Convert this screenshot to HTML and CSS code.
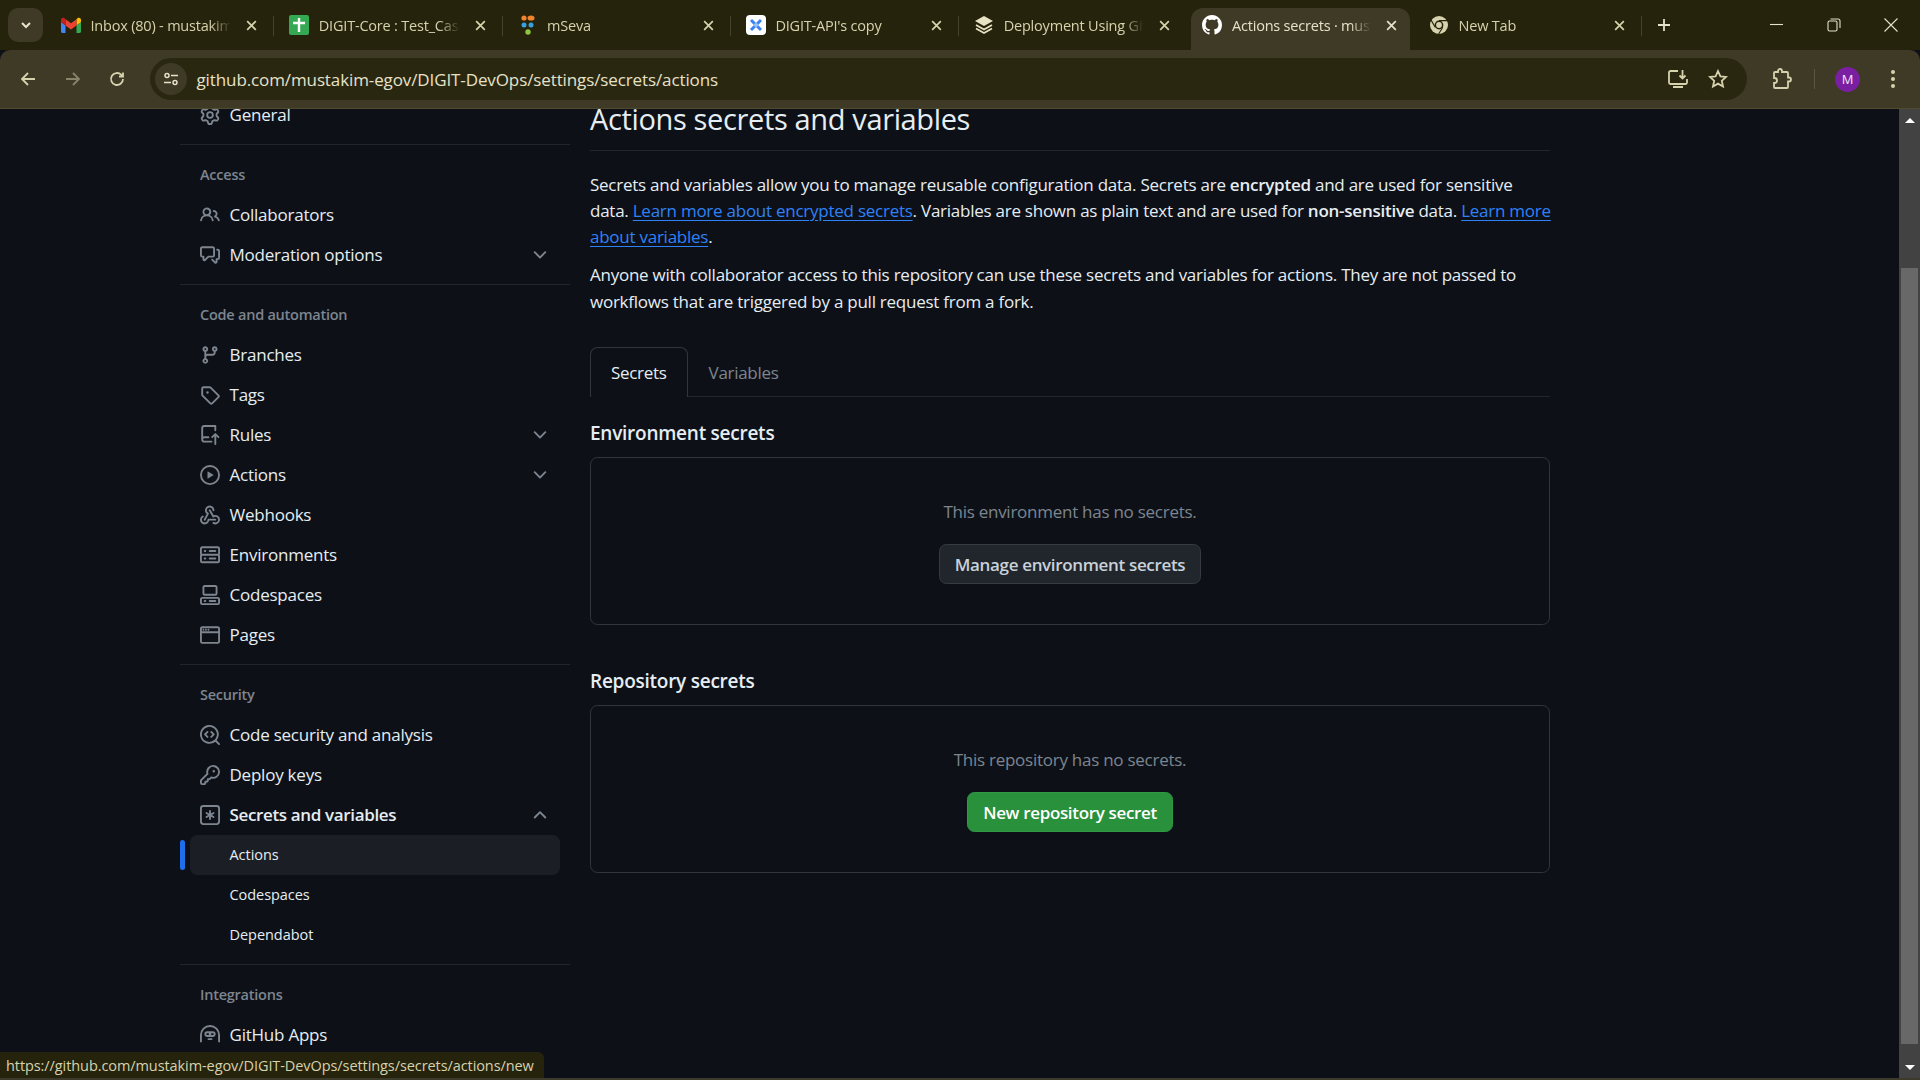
FILE: index.html
```html
<!DOCTYPE html>
<html lang="en">
<head>
    <meta charset="UTF-8">
    <title>Actions secrets</title>
    <link rel="stylesheet" href="styles.css">
</head>
<body>

<div class="tabstrip">
    <div class="tab-search"><svg viewBox="0 0 16 16" width="16" height="16"><path d="M4 6l4 4 4-4" fill="none" stroke="currentColor" stroke-width="2"/></svg></div>
    <div class="tabs">
        <div class="tab sep">
            <svg class="favicon" viewBox="0 0 20 16"><path d="M1.4 16H4.5V8.4L0 5v9.6C0 15.4.6 16 1.4 16Z" fill="#4285f4"/><path d="M15.5 16h3.1c.8 0 1.4-.6 1.4-1.4V5l-4.5 3.4Z" fill="#34a853"/><path d="M15.5 2.2v6.2L20 5V3c0-1.900-2.100-2.900-3.500-1.800Z" fill="#fbbc04"/><path d="M4.500 8.400V2.200L10 6.300l5.500-4.100v6.200L10 12.500Z" fill="#ea4335"/><path d="M0 3v2l4.500 3.400V2.200L3.500 1.200C2.100.1 0 1.100 0 3Z" fill="#c5221f"/></svg>
            <span class="tab-title">Inbox (80) - mustakim.egov</span>
            <svg class="tab-close" viewBox="0 0 12 12"><path d="M2 2l8 8M10 2l-8 8"/></svg>
        </div>
        <div class="tab sep">
            <svg class="favicon" viewBox="0 0 20 20"><rect width="20" height="20" rx="2" fill="#34a853"/><path d="M10 3v14M4 8h12" stroke="#fff" stroke-width="2.400"/></svg>
            <span class="tab-title">DIGIT-Core : Test_Cases</span>
            <svg class="tab-close" viewBox="0 0 12 12"><path d="M2 2l8 8M10 2l-8 8"/></svg>
        </div>
        <div class="tab sep">
            <svg class="favicon" viewBox="0 0 20 20"><circle cx="6" cy="3" r="2.600" fill="#f2842c"/><ellipse cx="13" cy="3" rx="3.500" ry="2.600" fill="#f2842c"/><circle cx="6" cy="10" r="2.500" fill="#3aa0dc"/><circle cx="13" cy="10" r="2.500" fill="#3aa0dc"/><circle cx="10" cy="17" r="2.700" fill="#8dc63f"/></svg>
            <span class="tab-title">mSeva</span>
            <svg class="tab-close" viewBox="0 0 12 12"><path d="M2 2l8 8M10 2l-8 8"/></svg>
        </div>
        <div class="tab sep">
            <svg class="favicon" viewBox="0 0 20 20"><rect width="20" height="20" rx="4" fill="#fff"/><path d="M5 5l10 10M15 5L5 15" stroke="#3b82f6" stroke-width="3"/><circle cx="10" cy="10" r="2" fill="#9cc3f7"/></svg>
            <span class="tab-title">DIGIT-API's copy</span>
            <svg class="tab-close" viewBox="0 0 12 12"><path d="M2 2l8 8M10 2l-8 8"/></svg>
        </div>
        <div class="tab">
            <svg class="favicon" viewBox="0 0 20 20"><path d="M10 1l9 5-9 5-9-5Z" fill="#e6e2c4"/><path d="M2 10l8 4.500 8-4.500M2 13.500l8 4.500 8-4.500" fill="none" stroke="#e6e2c4" stroke-width="1.800"/></svg>
            <span class="tab-title">Deployment Using GitHub</span>
            <svg class="tab-close" viewBox="0 0 12 12"><path d="M2 2l8 8M10 2l-8 8"/></svg>
        </div>
        <div class="tab active">
            <svg class="favicon" viewBox="0 0 16 16"><path fill="#fff" d="M8 0c4.420 0 8 3.580 8 8a8.013 8.013 0 0 1-5.450 7.590c-.4.080-.55-.17-.55-.38 0-.27.010-1.130.010-2.200 0-.75-.25-1.230-.54-1.480 1.780-.2 3.650-.88 3.650-3.950 0-.88-.31-1.590-.82-2.150.080-.2.360-1.020-.08-2.120 0 0-.67-.22-2.200.82-.64-.18-1.320-.27-2-.27-.68 0-1.360.090-2 .27-1.530-1.030-2.200-.82-2.200-.82-.44 1.100-.16 1.920-.08 2.120-.51.560-.82 1.280-.82 2.150 0 3.060 1.860 3.750 3.640 3.950-.23.2-.44.550-.51 1.070-.46.210-1.610.550-2.330-.66-.15-.24-.6-.83-1.230-.82-.67.010-.27.380.010.530.340.190.730.9.820 1.130.160.450.680 1.310 2.690.940 0 .670.010 1.300.010 1.490 0 .210-.15.450-.55.380A7.995 7.995 0 0 1 0 8c0-4.420 3.580-8 8-8Z"/></svg>
            <span class="tab-title">Actions secrets · mustakim</span>
            <svg class="tab-close" viewBox="0 0 12 12"><path d="M2 2l8 8M10 2l-8 8"/></svg>
        </div>
        <div class="tab sep">
            <svg class="favicon" viewBox="0 0 20 20"><circle cx="10" cy="10" r="9" fill="#d6d2ae"/><circle cx="10" cy="10" r="4.400" fill="#25230b"/><circle cx="10" cy="10" r="2.900" fill="#d6d2ae"/><path d="M10 5.600h8.300M6.200 12.200L2.100 5.100M13.800 12.200L9.600 19" stroke="#25230b" stroke-width="1.100"/></svg>
            <span class="tab-title">New Tab</span>
            <svg class="tab-close" viewBox="0 0 12 12"><path d="M2 2l8 8M10 2l-8 8"/></svg>
        </div>
        <div class="new-tab"><svg viewBox="0 0 14 14" width="14" height="14"><path d="M7 1v12M1 7h12" fill="none" stroke="currentColor" stroke-width="1.800"/></svg></div>
    </div>
    <div class="window-controls">
        <div class="win-btn"><svg viewBox="0 0 14 14" width="14" height="14"><path d="M0 6.500h13"/></svg></div>
        <div class="win-btn"><svg viewBox="0 0 14 14" width="14" height="14"><rect x="1" y="3" width="9" height="10" rx="1.500"/><path d="M3.500 1h7.500a2 2 0 0 1 2 2v7"/></svg></div>
        <div class="win-btn"><svg viewBox="0 0 14 14" width="14" height="14"><path d="M.5.500l13 13M13.500.500l-13 13"/></svg></div>
    </div>
</div>

<div class="toolbar">
    <div class="tool-btn"><svg viewBox="0 0 18 18" width="18" height="18"><path d="M16 9H3M9 3L3 9l6 6"/></svg></div>
    <div class="tool-btn dim"><svg viewBox="0 0 18 18" width="18" height="18"><path d="M2 9h13M9 3l6 6-6 6"/></svg></div>
    <div class="tool-btn"><svg viewBox="0 0 18 18" width="18" height="18"><path d="M15 9a6 6 0 1 1-1.800-4.300L15 6.500M15 2.500v4h-4"/></svg></div>
    <div class="omnibox">
        <div class="site-info"><svg viewBox="0 0 16 16" width="16" height="16"><circle cx="4" cy="4.500" r="2"/><path d="M8 4.500h7M1 11.500h7"/><circle cx="12" cy="11.500" r="2"/></svg></div>
        <span class="url">github.com/mustakim-egov/DIGIT-DevOps/settings/secrets/actions</span>
        <div class="omni-icon"><svg viewBox="0 0 22 22" width="22" height="22"><path d="M11 3H3.500A1.500 1.500 0 0 0 2 4.500v10A1.500 1.500 0 0 0 3.500 16h15a1.500 1.500 0 0 0 1.500-1.500V11M6 19h10M15.500 2v8M12.500 7.500l3 3 3-3"/></svg></div>
        <div class="omni-icon"><svg viewBox="0 0 20 20" width="20" height="20"><path d="M10 2l2.400 5.300 5.600.6-4.200 3.900 1.200 5.700-5-2.900-5 2.900 1.200-5.700L2 7.900l5.600-.6Z"/></svg></div>
    </div>
    <div class="tool-btn puzzle"><svg viewBox="0 0 22 22" width="22" height="22"><path d="M8 4V3a2 2 0 0 1 4 0v1h5a1 1 0 0 1 1 1v4.500h1a2 2 0 0 1 0 4h-1V19a1 1 0 0 1-1 1H5a1 1 0 0 1-1-1v-4h.5a2.500 2.500 0 0 0 0-5H4V5a1 1 0 0 1 1-1Z"/></svg></div>
    <div class="tool-sep"></div>
    <div class="avatar">M</div>
    <div class="kebab"><i></i><i></i><i></i></div>
</div>

<div class="page">
    <div class="viewport">
        <div class="layout">
            <nav class="side-nav">
                <a class="nav-row"><svg class="octicon" viewBox="0 0 16 16"><path d="M8 0a8.200 8.200 0 0 1 .701.031C9.444.095 9.990.645 10.160 1.290l.288 1.107c.018.066.079.158.212.224.231.114.454.243.668.386.123.082.233.090.299.071l1.103-.303c.644-.176 1.392.021 1.820.630.270.385.506.792.704 1.218.315.675.111 1.422-.364 1.891l-.814.806c-.049.048-.098.147-.088.294.016.257.016.515 0 .772-.010.147.038.246.088.294l.814.806c.475.469.679 1.216.364 1.891a7.977 7.977 0 0 1-.704 1.217c-.428.610-1.176.807-1.820.630l-1.102-.302c-.067-.019-.177-.011-.3.071a5.909 5.909 0 0 1-.668.386c-.133.066-.194.158-.211.224l-.29 1.106c-.168.646-.715 1.196-1.458 1.260a8.006 8.006 0 0 1-1.402 0c-.743-.064-1.289-.614-1.458-1.260l-.289-1.106c-.018-.066-.079-.158-.212-.224a5.738 5.738 0 0 1-.668-.386c-.123-.082-.233-.090-.299-.071l-1.103.303c-.644.176-1.392-.021-1.820-.630a8.120 8.120 0 0 1-.704-1.218c-.315-.675-.111-1.422.363-1.891l.815-.806c.050-.048.098-.147.088-.294a6.214 6.214 0 0 1 0-.772c.010-.147-.038-.246-.088-.294l-.815-.806C.635 6.045.431 5.298.746 4.623a7.920 7.920 0 0 1 .704-1.217c.428-.610 1.176-.807 1.820-.630l1.102.302c.067.019.177.011.3-.071.214-.143.437-.272.668-.386.133-.066.194-.158.211-.224l.29-1.106C6.009.645 6.556.095 7.299.030 7.530.010 7.764 0 8 0Zm-.571 1.525c-.036.003-.108.036-.137.146l-.289 1.105c-.147.561-.549.967-.998 1.189-.173.086-.34.183-.5.29-.417.278-.97.423-1.529.27l-1.103-.303c-.109-.03-.175.016-.195.045-.22.312-.412.644-.573.99-.014.031-.021.11.059.19l.815.806c.411.406.562.957.53 1.456a4.709 4.709 0 0 0 0 .582c.032.499-.119 1.050-.53 1.456l-.815.806c-.081.08-.073.159-.059.19.162.346.353.677.573.989.02.03.085.076.195.046l1.102-.303c.56-.153 1.113-.008 1.530.27.161.107.328.204.501.29.447.222.85.629.997 1.189l.289 1.105c.029.109.101.143.137.146a6.600 6.600 0 0 0 1.142 0c.036-.003.108-.036.137-.146l.289-1.105c.147-.561.549-.967.998-1.189.173-.086.34-.183.5-.29.417-.278.97-.423 1.529-.27l1.103.303c.109.029.175-.016.195-.045.22-.313.411-.644.573-.99.014-.031.021-.11-.059-.19l-.815-.806c-.411-.406-.562-.957-.53-1.456a4.709 4.709 0 0 0 0-.582c-.032-.499.119-1.050.53-1.456l.815-.806c.081-.08.073-.159.059-.19a6.464 6.464 0 0 0-.573-.989c-.02-.03-.085-.076-.195-.046l-1.102.303c-.56.153-1.113.008-1.530-.27a4.440 4.440 0 0 0-.501-.29c-.447-.222-.85-.629-.997-1.189l-.289-1.105c-.029-.11-.101-.143-.137-.146a6.600 6.600 0 0 0-1.142 0ZM11 8a3 3 0 1 1-6 0 3 3 0 0 1 6 0ZM9.500 8a1.500 1.500 0 1 0-3.001.001A1.500 1.500 0 0 0 9.500 8Z"/></svg>General</a>

                <div class="nav-group">
                    <h3 class="nav-heading">Access</h3>
                    <a class="nav-row"><svg class="octicon" viewBox="0 0 16 16"><path d="M2 5.500a3.500 3.500 0 1 1 5.898 2.549 5.508 5.508 0 0 1 3.034 4.084.75.75 0 1 1-1.482.235 4 4 0 0 0-7.9 0 .75.75 0 0 1-1.482-.236A5.507 5.507 0 0 1 3.102 8.050 3.490 3.490 0 0 1 2 5.500ZM11 4a3.001 3.001 0 0 1 2.220 5.018 5.010 5.010 0 0 1 2.560 3.012.749.749 0 0 1-.885.954.752.752 0 0 1-.549-.514 3.507 3.507 0 0 0-2.522-2.372.75.75 0 0 1-.574-.73v-.352a.75.75 0 0 1 .416-.672A1.500 1.500 0 0 0 11 5.500.75.75 0 0 1 11 4Zm-5.500-.5a2 2 0 1 0-.001 3.999A2 2 0 0 0 5.500 3.500Z"/></svg>Collaborators</a>
                    <a class="nav-row"><svg class="octicon" viewBox="0 0 16 16"><path d="M1.750 1h8.500c.966 0 1.750.784 1.750 1.750v5.500A1.750 1.750 0 0 1 10.250 10H7.061l-2.574 2.573A1.458 1.458 0 0 1 2 11.543V10h-.25A1.750 1.750 0 0 1 0 8.250v-5.500C0 1.784.784 1 1.750 1ZM1.500 2.750v5.500c0 .138.112.25.25.25h1a.75.75 0 0 1 .75.75v2.190l2.720-2.720a.749.749 0 0 1 .53-.22h3.500a.25.25 0 0 0 .25-.25v-5.500a.25.25 0 0 0-.25-.25h-8.500a.25.25 0 0 0-.25.25Zm13 2a.25.25 0 0 0-.25-.25h-.5a.75.75 0 0 1 0-1.500h.5c.966 0 1.750.784 1.750 1.750v5.500A1.750 1.750 0 0 1 14.250 12H14v1.543a1.458 1.458 0 0 1-2.487 1.030L9.220 12.280a.749.749 0 0 1 .326-1.275.749.749 0 0 1 .734.215l2.220 2.220v-2.190a.75.75 0 0 1 .75-.75h1a.25.25 0 0 0 .25-.25Z"/></svg>Moderation options<svg class="chevron" viewBox="0 0 16 16"><path d="M12.780 5.220a.749.749 0 0 1 0 1.060l-4.250 4.250a.749.749 0 0 1-1.060 0L3.220 6.280a.749.749 0 1 1 1.060-1.060L8 8.939l3.720-3.719a.749.749 0 0 1 1.060 0Z"/></svg></a>
                </div>

                <div class="nav-group">
                    <h3 class="nav-heading">Code and automation</h3>
                    <a class="nav-row"><svg class="octicon" viewBox="0 0 16 16"><path d="M9.500 3.250a2.250 2.250 0 1 1 3 2.122V6A2.500 2.500 0 0 1 10 8.500H6a1 1 0 0 0-1 1v1.128a2.251 2.251 0 1 1-1.500 0V5.372a2.250 2.250 0 1 1 1.500 0v1.836A2.493 2.493 0 0 1 6 7h4a1 1 0 0 0 1-1v-.628A2.250 2.250 0 0 1 9.500 3.250Zm-6 0a.75.75 0 1 0 1.500 0 .75.75 0 0 0-1.500 0Zm8.250-.75a.75.75 0 1 0 0 1.500.75.75 0 0 0 0-1.500ZM4.250 12a.75.75 0 1 0 0 1.500.75.75 0 0 0 0-1.500Z"/></svg>Branches</a>
                    <a class="nav-row"><svg class="octicon" viewBox="0 0 16 16"><path d="M1 7.775V2.750C1 1.784 1.784 1 2.750 1h5.025c.464 0 .91.184 1.238.513l6.250 6.250a1.750 1.750 0 0 1 0 2.474l-5.026 5.026a1.750 1.750 0 0 1-2.474 0l-6.250-6.250A1.752 1.752 0 0 1 1 7.775Zm1.500 0c0 .066.026.13.073.177l6.250 6.250a.25.25 0 0 0 .354 0l5.025-5.025a.25.25 0 0 0 0-.354l-6.250-6.250a.25.25 0 0 0-.177-.073H2.750a.25.25 0 0 0-.25.25ZM6 5a1 1 0 1 1 0 2 1 1 0 0 1 0-2Z"/></svg>Tags</a>
                    <a class="nav-row"><svg class="octicon" viewBox="0 0 16 16"><path d="M1 2.500A2.500 2.500 0 0 1 3.500 0h8.750a.75.75 0 0 1 .75.75v3.500a.75.75 0 0 1-1.500 0V1.500h-8a1 1 0 0 0-1 1v6.708A2.493 2.493 0 0 1 3.500 9h3.250a.75.75 0 0 1 0 1.500H3.500a1 1 0 0 0 0 2h5.750a.75.75 0 0 1 0 1.500H3.500A2.500 2.500 0 0 1 1 11.500Zm13.230 7.790h-.001l-1.224-1.224v6.184a.75.75 0 0 1-1.500 0V9.066L10.280 10.290a.75.75 0 0 1-1.060-1.061l2.505-2.504a.75.75 0 0 1 1.060 0L15.290 9.230a.751.751 0 0 1-.018 1.042.751.751 0 0 1-1.042.018Z"/></svg>Rules<svg class="chevron" viewBox="0 0 16 16"><path d="M12.780 5.220a.749.749 0 0 1 0 1.060l-4.250 4.250a.749.749 0 0 1-1.060 0L3.220 6.280a.749.749 0 1 1 1.060-1.060L8 8.939l3.720-3.719a.749.749 0 0 1 1.060 0Z"/></svg></a>
                    <a class="nav-row"><svg class="octicon" viewBox="0 0 16 16"><path d="M8 0a8 8 0 1 1 0 16A8 8 0 0 1 8 0ZM1.500 8a6.500 6.500 0 1 0 13 0 6.500 6.500 0 0 0-13 0Zm4.879-2.773 4.264 2.559a.25.25 0 0 1 0 .428l-4.264 2.559A.25.25 0 0 1 6 10.559V5.442a.25.25 0 0 1 .379-.215Z"/></svg>Actions<svg class="chevron" viewBox="0 0 16 16"><path d="M12.780 5.220a.749.749 0 0 1 0 1.060l-4.250 4.250a.749.749 0 0 1-1.060 0L3.220 6.280a.749.749 0 1 1 1.060-1.060L8 8.939l3.720-3.719a.749.749 0 0 1 1.060 0Z"/></svg></a>
                    <a class="nav-row"><svg class="octicon" viewBox="0 0 16 16"><path d="M5.500 4.250a2.250 2.250 0 0 1 4.500 0 .75.75 0 0 0 1.500 0 3.750 3.750 0 1 0-6.140 2.889l-2.272 4.258a.75.75 0 0 0 1.324.706L7 7.250a.75.75 0 0 0-.309-1.015A2.250 2.250 0 0 1 5.500 4.250Z"/><path d="M7.364 3.607a.75.75 0 0 1 1.030.257l2.608 4.349a3.750 3.750 0 1 1-.628 6.785.75.75 0 0 1 .752-1.299 2.250 2.250 0 1 0-.033-3.880.75.75 0 0 1-1.030-.256L7.107 4.636a.75.75 0 0 1 .257-1.030Z"/><path d="M2.900 8.776A.75.75 0 0 1 2.625 9.800 2.250 2.250 0 1 0 6 11.750a.75.75 0 0 1 .75-.751h5.500a.75.75 0 0 1 0 1.500H7.425a3.751 3.751 0 1 1-5.550-3.998.75.75 0 0 1 1.024.274Z"/></svg>Webhooks</a>
                    <a class="nav-row"><svg class="octicon" viewBox="0 0 16 16"><path d="M1.750 1h12.500c.966 0 1.750.784 1.750 1.750v4c0 .372-.116.717-.314 1 .198.283.314.628.314 1v4a1.750 1.750 0 0 1-1.750 1.750H1.750A1.750 1.750 0 0 1 0 12.750v-4c0-.372.116-.717.314-1a1.739 1.739 0 0 1-.314-1v-4C0 1.784.784 1 1.750 1ZM1.500 2.750v4c0 .138.112.25.25.25h12.500a.25.25 0 0 0 .25-.25v-4a.25.25 0 0 0-.25-.25H1.750a.25.25 0 0 0-.25.25Zm.25 5.750a.25.25 0 0 0-.25.25v4c0 .138.112.25.25.25h12.500a.25.25 0 0 0 .25-.25v-4a.25.25 0 0 0-.25-.25ZM7 4.750A.75.75 0 0 1 7.750 4h4.500a.75.75 0 0 1 0 1.500h-4.500A.75.75 0 0 1 7 4.750ZM7.750 10h4.500a.75.75 0 0 1 0 1.500h-4.500a.75.75 0 0 1 0-1.500ZM3 4.750A.75.75 0 0 1 3.750 4h.5a.75.75 0 0 1 0 1.500h-.5A.75.75 0 0 1 3 4.750ZM3.750 10h.5a.75.75 0 0 1 0 1.500h-.5a.75.75 0 0 1 0-1.500Z"/></svg>Environments</a>
                    <a class="nav-row"><svg class="octicon" viewBox="0 0 16 16"><path d="M0 11.250c0-.966.784-1.750 1.750-1.750h12.500c.966 0 1.750.784 1.750 1.750v3A1.750 1.750 0 0 1 14.250 16H1.750A1.750 1.750 0 0 1 0 14.250Zm2-9.500C2 .784 2.784 0 3.750 0h8.500C13.216 0 14 .784 14 1.750v5a1.750 1.750 0 0 1-1.750 1.750h-8.500A1.750 1.750 0 0 1 2 6.750Zm1.750-.25a.25.25 0 0 0-.25.25v5c0 .138.112.25.25.25h8.500a.25.25 0 0 0 .25-.25v-5a.25.25 0 0 0-.25-.25Zm-2 9.500a.25.25 0 0 0-.25.25v3c0 .138.112.25.25.25h12.500a.25.25 0 0 0 .25-.25v-3a.25.25 0 0 0-.25-.25Z"/><path d="M7 12.750a.75.75 0 0 1 .75-.75h4.500a.75.75 0 0 1 0 1.500h-4.500a.75.75 0 0 1-.75-.75Zm-4 0a.75.75 0 0 1 .75-.75h.5a.75.75 0 0 1 0 1.500h-.5a.75.75 0 0 1-.75-.75Z"/></svg>Codespaces</a>
                    <a class="nav-row"><svg class="octicon" viewBox="0 0 16 16"><path d="M0 2.750C0 1.784.784 1 1.750 1h12.500c.966 0 1.750.784 1.750 1.750v10.500A1.750 1.750 0 0 1 14.250 15H1.750A1.750 1.750 0 0 1 0 13.250ZM14.500 6.500h-13v6.750c0 .138.112.25.25.25h12.500a.25.25 0 0 0 .25-.25Zm-13-1.500h13V2.750a.25.25 0 0 0-.25-.25H1.750a.25.25 0 0 0-.25.25Zm2-1.250a.75.75 0 1 1-1.500 0 .75.75 0 0 1 1.500 0Zm2 0a.75.75 0 1 1-1.500 0 .75.75 0 0 1 1.500 0Zm2 0a.75.75 0 1 1-1.500 0 .75.75 0 0 1 1.500 0Z"/></svg>Pages</a>
                </div>

                <div class="nav-group">
                    <h3 class="nav-heading">Security</h3>
                    <a class="nav-row"><svg class="octicon" viewBox="0 0 16 16"><path d="M8.470 4.970a.75.75 0 0 0 0 1.060L9.940 7.500 8.470 8.970a.75.75 0 1 0 1.060 1.060l2-2a.75.75 0 0 0 0-1.060l-2-2a.75.75 0 0 0-1.060 0ZM6.530 6.030a.75.75 0 0 0-1.060-1.060l-2 2a.75.75 0 0 0 0 1.060l2 2a.75.75 0 1 0 1.060-1.060L5.060 7.500l1.470-1.470Z"/><path d="M12.246 13.307a7.501 7.501 0 1 1 1.060-1.060l2.474 2.473a.749.749 0 0 1-.326 1.275.749.749 0 0 1-.734-.215ZM1.500 7.500a6.002 6.002 0 0 0 3.608 5.504 6.002 6.002 0 0 0 6.486-1.117.748.748 0 0 1 .292-.293A6 6 0 1 0 1.500 7.500Z"/></svg>Code security and analysis</a>
                    <a class="nav-row"><svg class="octicon" viewBox="0 0 16 16"><path d="M10.500 0a5.499 5.499 0 1 1-1.288 10.848l-.932.932a.749.749 0 0 1-.53.22H7v.75a.749.749 0 0 1-.22.53l-.5.5a.749.749 0 0 1-.53.22H5v.75a.749.749 0 0 1-.22.53l-.5.5a.749.749 0 0 1-.53.22h-2A1.750 1.750 0 0 1 0 14.250v-2c0-.199.079-.389.22-.53l4.932-4.932A5.500 5.500 0 0 1 10.500 0Zm-4 5.500c-.001.431.069.86.205 1.269a.75.75 0 0 1-.181.768L1.500 12.560v1.690c0 .138.112.25.25.25h1.690l.06-.06v-1.190a.75.75 0 0 1 .75-.75h1.190l.06-.06v-1.190a.75.75 0 0 1 .75-.75h1.190l1.023-1.025a.75.75 0 0 1 .768-.18A4 4 0 1 0 6.500 5.500ZM11 6a1 1 0 1 1 0-2 1 1 0 0 1 0 2Z"/></svg>Deploy keys</a>
                    <a class="nav-row current"><svg class="octicon" viewBox="0 0 16 16"><path d="M0 2.750A2.750 2.750 0 0 1 2.750 0h10.500A2.750 2.750 0 0 1 16 2.750v10.500A2.750 2.750 0 0 1 13.250 16H2.750A2.750 2.750 0 0 1 0 13.250ZM2.750 1.500c-.69 0-1.250.56-1.250 1.250v10.500c0 .69.56 1.250 1.250 1.250h10.500c.69 0 1.250-.56 1.250-1.250V2.750c0-.69-.56-1.250-1.250-1.250Z"/><path d="M8 4a.75.75 0 0 1 .75.75V6.700l1.690-.975a.75.75 0 0 1 .75 1.300L9.500 8l1.690.976a.75.75 0 0 1-.75 1.298L8.750 9.300v1.951a.75.75 0 0 1-1.500 0V9.299l-1.690.976a.75.75 0 0 1-.75-1.300L6.500 8l-1.690-.975a.75.75 0 0 1 .75-1.300l1.690.976V4.750A.75.75 0 0 1 8 4Z"/></svg>Secrets and variables<svg class="chevron" viewBox="0 0 16 16"><path d="M3.220 10.530a.749.749 0 0 1 0-1.060l4.250-4.250a.749.749 0 0 1 1.060 0l4.250 4.250a.749.749 0 1 1-1.060 1.060L8 6.811 4.280 10.530a.749.749 0 0 1-1.060 0Z"/></svg></a>
                    <a class="nav-row sub selected">Actions</a>
                    <a class="nav-row sub">Codespaces</a>
                    <a class="nav-row sub">Dependabot</a>
                </div>

                <div class="nav-group">
                    <h3 class="nav-heading">Integrations</h3>
                    <a class="nav-row"><svg class="octicon" viewBox="0 0 16 16"><path d="M0 8a8 8 0 0 1 16 0v5.250a.75.75 0 0 1-1.500 0V8a6.500 6.500 0 1 0-13 0v5.250a.75.75 0 0 1-1.500 0Z"/><path d="M3.500 7.250A2.250 2.250 0 0 1 5.750 5h4.500a2.250 2.250 0 0 1 0 4.500h-4.500A2.250 2.250 0 0 1 3.500 7.250ZM5.750 6.500a.75.75 0 0 0 0 1.500h.75a.75.75 0 0 0 0-1.500Zm3.750 0a.75.75 0 0 0 0 1.500h.75a.75.75 0 0 0 0-1.500ZM6 11.250a.75.75 0 0 1 .75-.75h2.500a.75.75 0 0 1 0 1.500h-2.500a.75.75 0 0 1-.75-.75Z"/></svg>GitHub Apps</a>
                </div>
            </nav>

            <main class="content">
                <h2 class="page-title">Actions secrets and variables</h2>
                <p class="intro">Secrets and variables allow you to manage reusable configuration data. Secrets are <b>encrypted</b> and are used for sensitive<br>data. <a class="link">Learn more about encrypted secrets</a>. Variables are shown as plain text and are used for <b>non-sensitive</b> data. <a class="link">Learn more about variables</a>.</p>
                <p class="intro">Anyone with collaborator access to this repository can use these secrets and variables for actions. They are not passed to workflows that are triggered by a pull request from a fork.</p>

                <div class="tabnav">
                    <a class="tabnav-tab selected">Secrets</a>
                    <a class="tabnav-tab">Variables</a>
                </div>

                <h3 class="section-title">Environment secrets</h3>
                <div class="blank-box">
                    <p class="blank-text">This environment has no secrets.</p>
                    <a class="btn">Manage environment secrets</a>
                </div>

                <h3 class="section-title second">Repository secrets</h3>
                <div class="blank-box">
                    <p class="blank-text">This repository has no secrets.</p>
                    <a class="btn primary">New repository secret</a>
                </div>
            </main>
        </div>
        <div class="status-bubble">https://github.com/mustakim-egov/DIGIT-DevOps/settings/secrets/actions/new</div>
    </div>
    <div class="scrollbar">
        <div class="arrow up"></div>
        <div class="thumb"></div>
        <div class="arrow down"></div>
    </div>
</div>
<div class="window-edge"></div>

</body>
</html>
```
FILE: styles.css
```css
html, body {
    margin: 0;
    padding: 0;
    height: 100%;
    overflow: hidden;
    background-color: #0d1117;
    font-family: "Open Sans", "Liberation Sans", sans-serif;
}
body {
    display: flex;
    flex-direction: column;
}
a {
    color: inherit;
    text-decoration: none;
}

/* browser tabs */
.tabstrip {
    height: 50px;
    flex: none;
    display: flex;
    background-color: #25230b;
    color: #d6d2ae;
    font-size: 14.5px;
}
.tab-search {
    width: 35px;
    height: 34px;
    margin: 8px 3px 0 8px;
    border-radius: 10px;
    background-color: #3e3a26;
    display: flex;
    align-items: center;
    justify-content: center;
    color: #e8e4c8;
}
.tabs {
    flex: 1;
    display: flex;
    padding-top: 8px;
}
.tab {
    width: 228.3px;
    height: 42px;
    box-sizing: border-box;
    padding: 0 16px 8px 15px;
    display: flex;
    align-items: center;
    position: relative;
}
.tab.sep::after {
    content: "";
    position: absolute;
    right: 0;
    top: 8px;
    height: 20px;
    width: 1px;
    background-color: #45432c;
}
.tab.active {
    background-color: #3e3a26;
    color: #e6e2c8;
    border-radius: 12px 12px 0 0;
    margin: 0 4px;
    width: 218.5px;
    padding-left: 11px;
    padding-right: 12px;
}
.favicon {
    width: 20px;
    height: 20px;
    flex: none;
    margin-right: 9.5px;
}
.tab-title {
    flex: 1;
    white-space: nowrap;
    overflow: hidden;
    -webkit-mask-image: linear-gradient(to right, #000 85%, transparent 100%);
    mask-image: linear-gradient(to right, #000 85%, transparent 100%);
    letter-spacing: -0.2px;
}
.tab-close {
    width: 13px;
    height: 13px;
    flex: none;
    margin-left: 14px;
    fill: none;
    stroke: currentColor;
    stroke-width: 1.6;
}
.new-tab {
    width: 30px;
    height: 34px;
    margin-left: 7px;
    display: flex;
    align-items: center;
    justify-content: center;
    color: #e6e2c8;
}
.window-controls {
    display: flex;
    flex: none;
    padding-right: 1px;
}
.win-btn {
    width: 57px;
    height: 50px;
    display: flex;
    align-items: center;
    justify-content: center;
}
.win-btn svg {
    fill: none;
    stroke: #e6e2c8;
    stroke-width: 1.1;
}

/* address bar row */
.toolbar {
    height: 58px;
    flex: none;
    box-sizing: border-box;
    display: flex;
    align-items: center;
    background-color: #3e3a26;
    border-radius: 10px 10px 0 0;
    padding: 0 6px;
    color: #d6d2ae;
}
.tool-btn {
    width: 44.5px;
    height: 40px;
    display: flex;
    align-items: center;
    justify-content: center;
}
.tool-btn svg {
    fill: none;
    stroke: currentColor;
    stroke-width: 1.8;
}
.tool-btn.dim {
    color: #87836a;
}
.omnibox {
    width: 1597px;
    height: 42px;
    margin-left: 10px;
    box-sizing: border-box;
    border-radius: 21px;
    background-color: #2a2711;
    display: flex;
    align-items: center;
    padding: 0 9px 0 5px;
    color: #e6e2c8;
}
.site-info {
    width: 32px;
    height: 32px;
    border-radius: 50%;
    background-color: #3e3a26;
    display: flex;
    align-items: center;
    justify-content: center;
    margin-right: 10px;
}
.site-info svg {
    fill: none;
    stroke: #e6e2c8;
    stroke-width: 1.5;
}
.url {
    flex: 1;
    font-size: 17px;
    white-space: nowrap;
    letter-spacing: -0.11px;
}
.omni-icon {
    width: 40px;
    display: flex;
    justify-content: center;
    color: #d6d2ae;
}
.omni-icon svg {
    fill: none;
    stroke: currentColor;
    stroke-width: 1.8;
}
.puzzle {
    margin-left: 12px;
}
.tool-sep {
    width: 1px;
    height: 20px;
    margin: 0 20px 0 11px;
    background-color: #5a573e;
}
.avatar {
    width: 25px;
    height: 25px;
    border-radius: 50%;
    background-color: #7b1fa2;
    color: #f0e6f4;
    font-size: 13px;
    display: flex;
    align-items: center;
    justify-content: center;
}
.kebab {
    margin-left: 31px;
    display: flex;
    flex-direction: column;
    gap: 3px;
}
.kebab i {
    display: block;
    width: 4px;
    height: 4px;
    border-radius: 50%;
    background-color: #d6d2ae;
}

/* the page below the browser chrome */
.page {
    flex: 1;
    min-height: 0;
    display: flex;
    border-top: 1px solid #4f4b31;
}
.viewport {
    flex: 1;
    min-width: 0;
    position: relative;
    overflow: hidden;
}
.layout {
    display: flex;
    margin-top: -14px;
    padding-left: 180px;
    color: #e6edf3;
    font-size: 17px;
    letter-spacing: -0.23px;
}

/* settings sidebar */
.side-nav {
    width: 390px;
    flex: none;
}
.nav-group {
    border-top: 1px solid #21262d;
    margin-top: 9px;
}
.nav-heading {
    margin: 20px 0 10px 20px;
    font-size: 14.5px;
    line-height: 20px;
    font-weight: 600;
    letter-spacing: -0.24px;
    color: #7d8590;
}
.nav-row {
    height: 40px;
    box-sizing: border-box;
    margin: 0 10px;
    padding: 0 10px 2px 10px;
    display: flex;
    align-items: center;
    border-radius: 7.5px;
    position: relative;
}
.nav-row.current {
    font-weight: 600;
    letter-spacing: -0.35px;
}
.nav-row.sub {
    padding-left: 39.5px;
    font-size: 14.5px;
    letter-spacing: -0.05px;
}
.nav-row.selected {
    background-color: #1b1f25;
}
.nav-row.selected::before {
    content: "";
    position: absolute;
    left: -10px;
    top: 5px;
    width: 5px;
    height: 30px;
    border-radius: 3px;
    background-color: #1f6feb;
}
.octicon {
    width: 20px;
    height: 20px;
    flex: none;
    margin: 2px 9.5px 0 0;
    fill: #7d8590;
}
.chevron {
    width: 20px;
    height: 20px;
    margin: 2px 0 0 auto;
    fill: #7d8590;
}

/* main column */
.content {
    width: 960px;
    margin-left: 20px;
    padding-top: 5px;
}
.page-title {
    margin: 0 0 21px 0;
    padding-bottom: 12px;
    border-bottom: 1px solid #21262d;
    font-size: 29px;
    line-height: 37.5px;
    font-weight: 400;
    letter-spacing: -0.36px;
}
.intro {
    margin: 0 -6px 12px 0;
    line-height: 26.25px;
    letter-spacing: -0.25px;
}
.intro b {
    font-weight: 600;
}
.link {
    color: #2f81f7;
    text-decoration: underline;
    text-underline-offset: 3px;
}
.tabnav {
    display: flex;
    height: 50px;
    margin-top: 32px;
    box-sizing: border-box;
    border-bottom: 1px solid #21262d;
}
.tabnav-tab {
    height: 50px;
    box-sizing: border-box;
    padding: 0 20px;
    display: flex;
    align-items: center;
    color: #7d8590;
    border: 1px solid transparent;
    border-bottom: 0;
    letter-spacing: -0.3px;
}
.tabnav-tab.selected {
    color: #e6edf3;
    background-color: #0d1117;
    border-color: #30363d;
    border-radius: 7.5px 7.5px 0 0;
}
.section-title {
    margin: 21px 0 9px 0;
    font-size: 19px;
    line-height: 30px;
    font-weight: 600;
    letter-spacing: -0.25px;
}
.section-title.second {
    margin-top: 41px;
}
.blank-box {
    height: 168px;
    box-sizing: border-box;
    border: 1px solid #30363d;
    border-radius: 7.5px;
    padding-top: 41px;
    display: flex;
    flex-direction: column;
    align-items: center;
}
.blank-text {
    margin: 0 0 19px 0;
    line-height: 26.25px;
    color: #7d8590;
    letter-spacing: -0.26px;
}
.btn {
    height: 40px;
    box-sizing: border-box;
    padding: 0 15px;
    display: flex;
    align-items: center;
    border-radius: 7.5px;
    border: 1px solid #363b42;
    background-color: #21262d;
    color: #c9d1d9;
    font-weight: 600;
    letter-spacing: -0.34px;
}
.btn.primary {
    background-color: #29903b;
    border-color: #2f9a44;
    color: #fff;
}

/* link preview bubble, sits over the bottom of the page */
.status-bubble {
    position: absolute;
    left: 0;
    bottom: 0;
    height: 26px;
    padding: 0 10px 0 6px;
    display: flex;
    align-items: center;
    background-color: #25230b;
    border-top-right-radius: 6px;
    color: #d6d2ae;
    font-size: 14.5px;
    letter-spacing: -0.08px;
    white-space: nowrap;
}

/* page scrollbar */
.scrollbar {
    width: 21px;
    flex: none;
    background-color: #424242;
    display: flex;
    flex-direction: column;
    align-items: center;
}
.arrow {
    width: 0;
    height: 0;
    border-left: 5px solid transparent;
    border-right: 5px solid transparent;
    margin: 0;
}
.arrow.up {
    border-bottom: 5px solid #fff;
    margin: 9px 0;
}
.arrow.down {
    border-top: 5px solid #fff;
    margin: 21px 0 8px 0;
}
.thumb {
    width: 17px;
    height: 776px;
    margin-top: 136px;
    background-color: #686868;
}

.window-edge {
    height: 2px;
    flex: none;
    background-color: #3b3a2b;
}
```
